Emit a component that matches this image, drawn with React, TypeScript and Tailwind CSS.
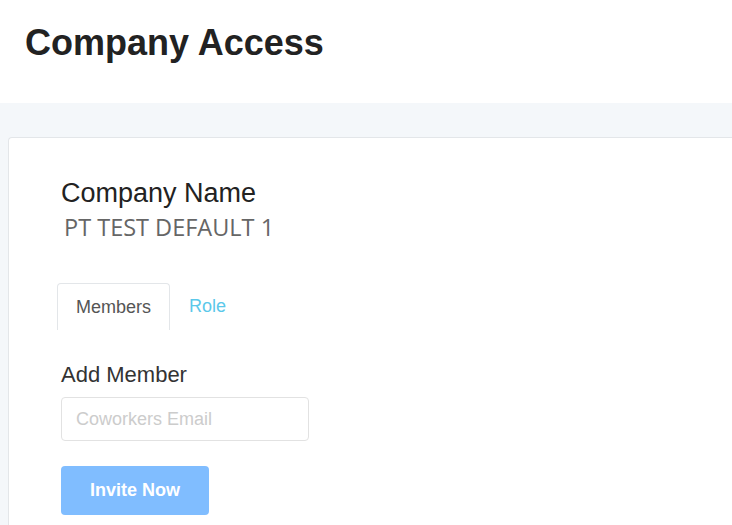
import React from "react"

export default function App() {
  return (
    <div className="w-[732px] h-[525px] overflow-hidden bg-white font-['Liberation_Sans',Arial,sans-serif]">
      <header className="h-[103px] pl-[25px] pt-[23px]">
        <h1 className="text-[36px] leading-[40px] font-bold text-[#222]">Company Access</h1>
      </header>
      <div className="bg-[#f4f7fa] pt-[34px] pl-[8px] h-[422px]">
        <div className="h-full bg-white border-t border-l border-[#e3e6e9] rounded-tl-[4px] pl-[52px] pt-[40px]">
          <div className="text-[27px] leading-[30px] text-[#222]">Company Name</div>
          <div className="mt-[5px] pl-[3px] text-[23.5px] leading-[28px] text-[#666] font-['Open_Sans',sans-serif]">
            PT TEST DEFAULT 1
          </div>

          <div className="mt-[42px] -ml-[4px] flex items-end">
            <div className="w-[113px] h-[47px] border border-b-0 border-[#e3e6e9] rounded-t-[4px] flex items-center justify-center text-[18px] text-[#555]">
              Members
            </div>
            <div className="pl-[19px] h-[47px] flex items-center text-[18px] text-[#5bc8ea]">Role</div>
          </div>

          <div className="mt-[32px] text-[22px] leading-[26px] text-[#333]">Add Member</div>
          <input
            className="mt-[9px] block w-[248px] h-[44px] border border-[#e2e2e2] rounded-[4px] px-[14px] text-[18px] placeholder:text-[#ccc] outline-none"
            placeholder="Coworkers Email"
          />
          <button className="mt-[25px] w-[148px] h-[49px] bg-[#80bdff] rounded-[4px] text-white text-[18px] font-bold">
            Invite Now
          </button>
        </div>
      </div>
    </div>
  )
}
